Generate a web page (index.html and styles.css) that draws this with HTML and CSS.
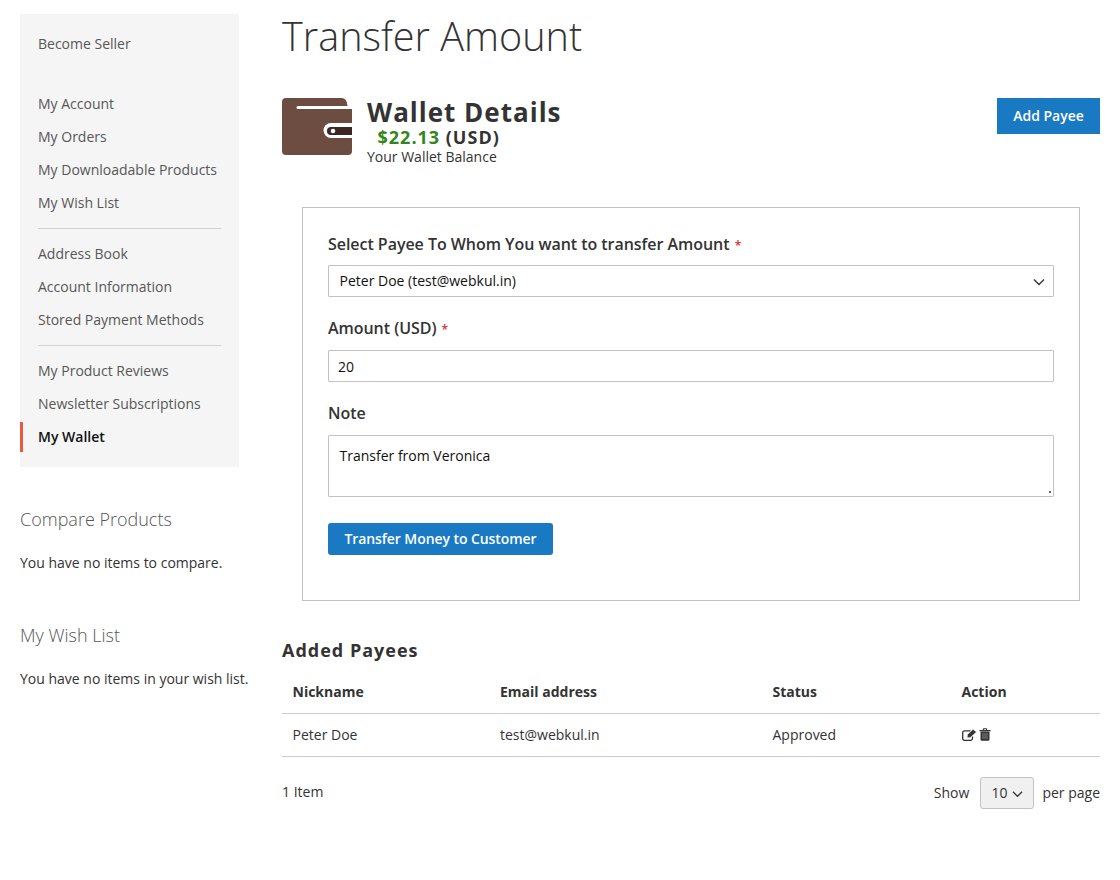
FILE: index.html
```html
<!DOCTYPE html>
<html lang="en">
<head>
<meta charset="utf-8">
<title>Transfer Amount</title>
<link rel="stylesheet" href="styles.css">
</head>
<body>
<div class="page">
  <aside class="sidebar">
    <nav class="nav">
      <div class="nav-top"><a>Become Seller</a></div>
      <ul class="nav-list">
        <li><a>My Account</a></li>
        <li><a>My Orders</a></li>
        <li><a>My Downloadable Products</a></li>
        <li><a>My Wish List</a></li>
        <li class="sep"></li>
        <li><a>Address Book</a></li>
        <li><a>Account Information</a></li>
        <li><a>Stored Payment Methods</a></li>
        <li class="sep"></li>
        <li><a>My Product Reviews</a></li>
        <li><a>Newsletter Subscriptions</a></li>
        <li class="current"><a>My Wallet</a></li>
      </ul>
    </nav>
    <section class="block block-compare">
      <h3 class="block-title">Compare Products</h3>
      <p class="block-text">You have no items to compare.</p>
    </section>
    <section class="block block-wish">
      <h3 class="block-title">My Wish List</h3>
      <p class="block-text">You have no items in your wish list.</p>
    </section>
  </aside>
  <main class="main">
    <h1 class="title">Transfer Amount</h1>
    <div class="wallet">
      <svg class="wallet-icon" width="70" height="57" viewBox="0 0 70 57">
        <path d="M4 0H59Q64 0 65 5L66 11H70V53Q70 57 66 57H4Q0 57 0 53V4Q0 0 4 0Z" fill="#6d4c41"/>
        <path d="M16 9.500H70" stroke="#fff" stroke-width="3" stroke-linecap="round" fill="none"/>
        <path d="M70 25H49A7.500 7.500 0 0 0 49 40H70Z" fill="#fff"/>
        <path d="M70 29H49A4 4 0 0 0 49 37H70Z" fill="#3e2723"/>
        <circle cx="51" cy="33" r="2.300" fill="#fff"/>
      </svg>
      <div class="wallet-info">
        <div class="wallet-head">Wallet Details</div>
        <div class="wallet-amount"><span class="money">$22.13</span> (USD)</div>
        <div class="wallet-sub">Your Wallet Balance</div>
      </div>
      <button class="btn btn-payee" type="button">Add Payee</button>
    </div>
    <form class="panel">
      <label class="label">Select Payee To Whom You want to transfer Amount <span class="req">*</span></label>
      <div class="select-wrap">
        <select class="control select"><option>Peter Doe (test@webkul.in)</option></select>
        <svg class="chev" width="12" height="8" viewBox="0 0 12 8"><path d="M1 1.500L6 6.500L11 1.500" fill="none" stroke="#333" stroke-width="1.400"/></svg>
      </div>
      <label class="label label-amount">Amount (USD) <span class="req">*</span></label>
      <input class="control input" type="text" value="20">
      <label class="label label-note">Note</label>
      <textarea class="control textarea">Transfer from Veronica</textarea>
      <button class="btn btn-transfer" type="button">Transfer Money to Customer</button>
    </form>
    <h2 class="payees-title">Added Payees</h2>
    <table class="table">
      <thead>
        <tr><th class="c1">Nickname</th><th class="c2">Email address</th><th class="c3">Status</th><th class="c4">Action</th></tr>
      </thead>
      <tbody>
        <tr>
          <td>Peter Doe</td><td>test@webkul.in</td><td>Approved</td>
          <td class="actions">
            <svg width="15" height="12" viewBox="0 0 15 12"><path d="M10.500 7.500V9.500Q10.500 11.300 8.700 11.300H2.500Q0.700 11.300 0.700 9.500V3.700Q0.700 1.900 2.500 1.900H8.500" fill="none" stroke="#333" stroke-width="1.300"/><path d="M5 8.500L5.500 5.500L11 0.300L14.500 3L8 8.800Z" fill="#333" stroke="#fff" stroke-width="0.600"/></svg>
            <svg width="12" height="13" viewBox="0 0 12 13"><path d="M0.500 2H11.500V3.200H0.500ZM3.500 2.500L4.300 0.300H7.700L8.500 2.500H7.300L7 1.300H5L4.700 2.500Z" fill="#333"/><path d="M1.500 3.500H10.500V11.200Q10.500 12.800 9 12.800H3Q1.500 12.800 1.500 11.200Z" fill="#333"/><path d="M4 5V11M6 5V11M8 5V11" stroke="#999" stroke-width="0.800"/></svg>
          </td>
        </tr>
      </tbody>
    </table>
    <div class="pager">
      <span class="count">1 Item</span>
      <div class="limiter">
        <span>Show</span>
        <span class="limit-box">10<svg width="12" height="8" viewBox="0 0 12 8"><path d="M1 1.500L6 6.500L11 1.500" fill="none" stroke="#333" stroke-width="1.300"/></svg></span>
        <span>per page</span>
      </div>
    </div>
  </main>
</div>
</body>
</html>
```

FILE: styles.css
```css
* { box-sizing: border-box; }
html, body { margin: 0; padding: 0; background: #fff; }
body {
  font-family: "Open Sans", "Liberation Sans", sans-serif;
  font-size: 14px;
  line-height: 20px;
  color: #333;
}
.page {
  display: flex;
  align-items: flex-start;
  gap: 43px;
  padding: 0 20px;
  width: 1120px;
  height: 880px;
  overflow: hidden;
}
.sidebar { width: 219px; flex: none; padding-top: 14px; }
.nav { background: #f5f5f5; height: 453px; }
.nav-top { height: 60px; padding: 20px 18px 0; }
.nav a { color: #575757; display: block; }
.nav-list { list-style: none; margin: 0; padding: 13px 0 0; }
.nav-list li { height: 33px; padding: 6.500px 18px; }
.nav-list li.sep {
  height: 1px;
  padding: 0;
  margin: 9px 18px 8px;
  background: #d1d1d1;
}
.nav-list li.current {
  border-left: 3px solid #e9593f;
  padding-left: 15px;
  height: 30px;
  margin-top: 1.500px;
  padding-top: 5px;
}
.nav-list li.current a { color: #111; font-weight: 600; }
.block { width: 240px; }
.block-compare { margin-top: 40px; }
.block-wish { margin-top: 50px; }
.block-title { margin: 0; font-size: 18px; font-weight: 300; line-height: 24px; color: #575757; }
.block-text { margin: 22px 0 0; white-space: nowrap; }
.main { width: 818px; flex: none; }
.title {
  margin: 11px 0 0;
  font-size: 39.600px;
  font-weight: 300;
  line-height: 50px;
  height: 50px;
  color: #333;
}
.wallet { display: flex; align-items: flex-start; margin-top: 37px; height: 73px; }
.wallet-icon { flex: none; margin-right: 15px; }
.wallet-info { flex: 1; }
.wallet-head {
  font-size: 26px;
  font-weight: 700;
  line-height: 28px;
  letter-spacing: 1px;
  color: #333;
}
.wallet-amount {
  font-size: 18px;
  font-weight: 700;
  line-height: 20px;
  padding-left: 10.500px;
  letter-spacing: 1px;
  margin-top: 1px;
}
.money { color: #33851c; }
.wallet-sub { line-height: 20px; }
.btn {
  border: 0;
  background: #1979c3;
  color: #fff;
  font-family: inherit;
  font-size: 14px;
  font-weight: 600;
  line-height: 20px;
  display: block;
}
.btn-payee { width: 103px; height: 36px; padding: 0; flex: none; }
.panel {
  margin: 36px 20px 0;
  height: 394px;
  border: 1px solid #c2c2c2;
  padding: 26px 25px 0;
}
.label {
  display: block;
  font-size: 16px;
  font-weight: 600;
  line-height: 20px;
  height: 20px;
  letter-spacing: -0.040px;
}
.req { color: #e02b27; font-size: 12px; margin-left: 1px; }
.control {
  display: block;
  width: 100%;
  border: 1px solid #c2c2c2;
  background: #fff;
  font-family: inherit;
  font-size: 14px;
  color: #111;
  border-radius: 1px;
  margin: 0;
  outline: none;
}
.select-wrap { position: relative; margin-top: 11px; }
.select { height: 32px; padding: 0 10.500px 2px; appearance: none; -webkit-appearance: none; }
.chev { position: absolute; right: 9px; top: 13px; }
.label-amount { margin-top: 21px; }
.input { height: 32px; padding: 0 9px; margin-top: 12px; }
.label-note { margin-top: 21px; }
.textarea {
  height: 62px;
  margin-top: 12px;
  padding: 10px 10.500px;
  line-height: 20px;
  resize: vertical;
}
.textarea::-webkit-resizer {
  background: linear-gradient(#666, #666) 11px 10px / 2px 2px no-repeat;
}
.btn-transfer {
  margin-top: 26px;
  width: 225px;
  height: 32px;
  border-radius: 3px;
  padding: 0;
  letter-spacing: -0.070px;
}
.payees-title {
  margin: 37px 0 0;
  font-size: 18px;
  font-weight: 700;
  line-height: 24px;
  letter-spacing: 1px;
}
.table { width: 100%; border-collapse: collapse; table-layout: fixed; margin-top: 9px; }
.table th {
  text-align: left;
  font-weight: 700;
  padding: 11px 10.500px 10px;
  height: 42px;
  border-bottom: 1px solid #ccc;
}
.table td {
  padding: 11px 10.500px;
  height: 43px;
  border-bottom: 1px solid #ccc;
}
.c1 { width: 207.500px; }
.c2 { width: 272.500px; }
.c3 { width: 189px; }
.actions { white-space: nowrap; font-size: 0; }
.actions svg { vertical-align: middle; margin-right: 2px; }
.pager {
  display: flex;
  justify-content: space-between;
  align-items: center;
  margin-top: 20px;
  height: 32px;
}
.count { padding-bottom: 2px; }
.limiter { display: flex; align-items: center; }
.limit-box {
  width: 54px;
  height: 32px;
  display: flex;
  align-items: center;
  gap: 5px;
  padding: 0 10px;
  margin: 0 8px 0 11px;
  background: #f0f0f0;
  border: 1px solid #c2c2c2;
  border-radius: 3px;
  color: #333;
}
.limit-box svg { margin-top: 3px; }
```
